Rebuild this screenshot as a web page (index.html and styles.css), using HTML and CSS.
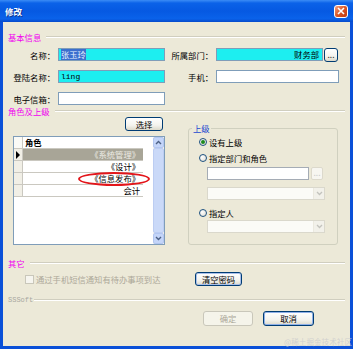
FILE: index.html
```html
<!DOCTYPE html>
<html>
<head>
<meta charset="utf-8" />
<title>修改</title>
<link rel="stylesheet" href="styles.css">
</head>
<body>
<div class="win">
	<div class="titlebar">
		<span class="title">修改</span>
		<span class="close"><svg width="8" height="8" viewBox="0 0 8 8"><path d="M1 1L7 7M7 1L1 7" stroke="#fff" stroke-width="1.6"/></svg></span>
	</div>
	<div class="client">
		<!-- 基本信息 -->
		<div class="sec"><span>基本信息</span></div>
		<div class="row">
			<span class="lbl">名称：</span>
			<span class="txt hl"><span class="sel">张玉玲</span></span>
			<span class="lbl lbl2">所属部门：</span>
			<span class="txt hl right">财务部</span>
			<span class="btn dots">...</span>
		</div>
		<div class="row">
			<span class="lbl">登陆名称：</span>
			<span class="txt hl mono">ling</span>
			<span class="lbl lbl2">手机：</span>
			<span class="txt wide"></span>
		</div>
		<div class="row">
			<span class="lbl">电子信箱：</span>
			<span class="txt"></span>
		</div>
		<!-- 角色及上级 -->
		<div class="sec"><span>角色及上级</span></div>
		<div class="mid">
			<div class="leftcol">
				<span class="btn pick">选择</span>
				<div class="grid">
					<div class="tbl">
						<div class="tr th"><span class="rh"></span><span class="td">角色</span></div>
						<div class="tr cur"><span class="rh"></span><span class="td">《系统管理》</span></div>
						<div class="tr"><span class="rh"></span><span class="td">《设计》</span></div>
						<div class="tr"><span class="rh"></span><span class="td">《信息发布》</span></div>
						<div class="tr"><span class="rh"></span><span class="td">会计</span></div>
					</div>
					<div class="vscroll">
						<span class="arr"><svg width="7" height="5" viewBox="0 0 7 5"><path d="M1 4L3.5 1.5L6 4" fill="none" stroke="#4d6185" stroke-width="1.4"/></svg></span>
						<span class="thumb"></span>
						<span class="arr"><svg width="7" height="5" viewBox="0 0 7 5"><path d="M1 1L3.5 3.5L6 1" fill="none" stroke="#4d6185" stroke-width="1.4"/></svg></span>
					</div>
					<span class="mark"></span>
				</div>
			</div>
			<div class="group">
				<span class="legend">上级</span>
				<div class="opt opt1"><span class="radio on"></span>设有上级</div>
				<div class="opt opt2"><span class="radio"></span>指定部门和角色</div>
				<div class="pickrow"><span class="dtxt"></span><span class="dbtn">...</span></div>
				<div class="combo"><span class="dd"><svg width="7" height="5" viewBox="0 0 7 5"><path d="M1 1L3.5 3.5L6 1" fill="none" stroke="#c3c3bd" stroke-width="1.3"/></svg></span></div>
				<div class="opt opt3"><span class="radio"></span>指定人</div>
				<div class="combo combo2"><span class="dd"><svg width="7" height="5" viewBox="0 0 7 5"><path d="M1 1L3.5 3.5L6 1" fill="none" stroke="#c3c3bd" stroke-width="1.3"/></svg></span></div>
			</div>
		</div>
		<!-- 其它 -->
		<div class="sec sec3"><span>其它</span></div>
		<div class="optrow">
			<span class="chkl"><span class="chk"></span>通过手机短信通知有待办事项到达</span>
			<span class="btn clr">清空密码</span>
		</div>
		<div class="sec sec4"><span>SSSoft</span></div>
		<div class="btnbar">
			<span class="btn off">确定</span>
			<span class="btn def">取消</span>
		</div>
	</div>
	<span class="wm">@稀土掘金技术社区</span>
</div>
</body>
</html>
```

FILE: styles.css
```css
* {margin:0;padding:0;box-sizing:border-box;}
body {font-family:"Noto Sans CJK SC","Liberation Sans",sans-serif;font-size:8.3px;color:#000;background:#fff;}
.win {position:relative;width:353px;height:349px;background:#0a50d8;display:flex;flex-direction:column;overflow:hidden;}
/*标题栏*/
.titlebar {height:22px;display:flex;align-items:center;justify-content:space-between;padding:0 5px;background:linear-gradient(#3b8cf6 0%,#0b62e8 14%,#0659e2 50%,#0a62ea 85%,#064acb 100%);}
.title {color:#fff;font-weight:bold;font-size:8.5px;text-shadow:1px 1px 0 #0a2f8a;}
.close {width:14px;height:13px;border:1px solid #fff;border-radius:3px;background:linear-gradient(135deg,#f3a183,#dc5624 50%,#c03a12);display:flex;align-items:center;justify-content:center;}
.client {flex:1;margin:0 3px 3px;background:#ece9d8;padding-top:9px;}
/*分组标题*/
.sec {display:flex;align-items:center;height:12px;padding:0 5px;color:#f000f0;line-height:12px;}
.sec::after {content:"";flex:1;margin-left:5px;border-top:1px solid #d0cebf;border-bottom:1px solid #fff;}
.sec3 {margin-top:12px;}
.sec4 {margin-top:9px;height:10px;color:#a8a8a0;font-family:"Liberation Mono",monospace;font-size:7px;}
.sec4::after {margin-left:1px;}
/*基本信息*/
.row {display:flex;align-items:center;height:13px;margin-top:9px;}
.sec + .row {margin-top:5px;}
.lbl {width:52px;margin-right:3px;text-align:right;white-space:nowrap;}
.lbl2 {width:45px;margin:0 3px 0 3px;}
.txt {width:107px;height:13px;border:1px solid #7f9db9;background:#fff;line-height:11px;padding:0 2px;overflow:hidden;white-space:nowrap;}
.txt.wide {width:123px;}
.hl {background:#1deef0;}
.right {text-align:right;padding-right:3px;}
.mono {font-family:"Liberation Mono",monospace;font-size:8px;}
.sel {background:#3b6fce;color:#e8f4ff;}
/*按钮*/
.btn {display:flex;align-items:center;justify-content:center;border:1px solid #003c74;border-radius:3px;background:linear-gradient(#fff,#f4f3ee 60%,#dcd9ca);line-height:11px;}
.dots {width:14px;height:14px;margin-left:1px;color:#333;}
.btn.def {box-shadow:inset 0 0 0 1px #8fb0e8;}
.btn.off {border-color:#c9c7ba;color:#aca899;background:#f5f4ea;}
/*角色及上级*/
.mid {display:flex;}
.leftcol {width:152px;margin-left:10px;display:flex;flex-direction:column;}
.pick {align-self:flex-end;width:38px;height:14px;margin-right:2px;}
.grid {position:relative;display:flex;margin-top:5px;height:109px;border:1px solid #7f9db9;background:#fff;}
.tbl {width:129px;}
.tr {display:flex;height:12px;border-bottom:1px solid #cac8c0;}
.rh {width:9px;background:#f1efe6;border-right:1px solid #cac8c0;display:flex;align-items:center;justify-content:center;}
.td {flex:1;text-align:right;padding-right:3px;line-height:11px;white-space:nowrap;}
.th .rh {background:#fafaf6;}
.th .td {text-align:left;padding-left:2px;font-weight:bold;}
.cur .td {background:#a8a597;color:#ecebe4;}
.cur .rh::after {content:"";border-left:4px solid #000;border-top:4px solid transparent;border-bottom:4px solid transparent;}
.vscroll {margin-left:auto;width:11px;display:flex;flex-direction:column;background:#f3f1ec;}
.arr {height:11px;display:flex;align-items:center;justify-content:center;background:#c4d5f9;border:1px solid #b2c6f0;border-radius:2px;}
.thumb {flex:1;background:#cad9f8;border:1px solid #bccdf2;border-radius:2px;}
.mark {position:absolute;left:64px;top:35px;width:72px;height:14px;border:2px solid #e3151a;border-radius:50%;}
/*上级*/
.group {margin:11px 0 0 23px;width:150px;height:117px;border:1px solid #d0d0bf;border-radius:3px;padding-left:10px;}
.legend {display:block;width:fit-content;margin:-6px 0 0 -7px;padding:0 1px;background:#ece9d8;color:#1a48d0;line-height:11px;}
.opt {display:flex;align-items:center;height:12px;white-space:nowrap;}
.opt1 {margin-top:2px;}
.opt2 {margin-top:4px;}
.opt3 {margin-top:7px;}
.radio {width:8px;height:8px;margin-right:2px;border:1px solid #1c5180;border-radius:50%;background:radial-gradient(circle at 35% 35%,#fff,#dcd9cf);display:flex;align-items:center;justify-content:center;}
.radio.on::after {content:"";width:4px;height:4px;border-radius:50%;background:#1d8a1d;}
.pickrow {display:flex;gap:2px;height:13px;margin:3px 0 0 8px;}
.dtxt {width:102px;border:1px solid #a5acb5;background:#fff;}
.dbtn {width:12px;border:1px solid #dcd9cc;border-radius:2px;background:#f7f6f1;color:#ccc;line-height:8px;text-align:center;}
.combo {display:flex;justify-content:flex-end;width:118px;height:13px;margin:7px 0 0 8px;border:1px solid #dad8cc;background:#fbfbf7;}
.combo2 {margin-top:1px;}
.dd {width:11px;display:flex;align-items:center;justify-content:center;background:#f2f1ea;border-left:1px solid #ebe9df;}
/*其它*/
.optrow {display:flex;align-items:center;height:14px;margin-top:3px;padding-left:22px;}
.chkl {width:170px;display:flex;align-items:center;color:#aca899;white-space:nowrap;}
.chk {width:9px;height:9px;margin-right:2px;border:1px solid #c9c7ba;background:#f6f5ef;}
.clr {width:47px;height:14px;box-shadow:inset 0 0 0 1px #a9c0ea;}
.btnbar {display:flex;justify-content:flex-end;gap:10px;margin-top:6px;padding-right:36px;}
.btnbar .btn {width:50px;height:15px;}
.btnbar .def {width:51px;}
.wm {position:absolute;right:1px;bottom:3px;font-size:7.6px;line-height:9px;color:rgba(205,205,205,0.9);}
```
